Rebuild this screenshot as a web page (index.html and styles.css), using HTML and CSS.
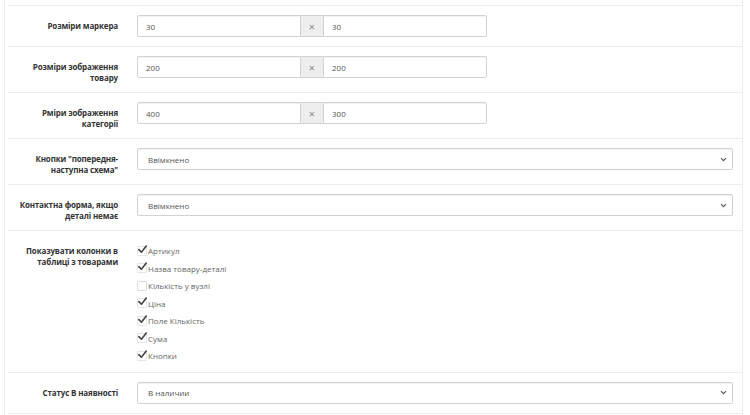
FILE: index.html
```html
<!DOCTYPE html>
<html lang="uk">
<head>
<meta charset="utf-8">
<link rel="stylesheet" href="styles.css">
</head>
<body>
<div class="panel">
  <div class="row">
    <label class="lbl">Розміри маркера</label>
    <div class="ctl">
      <div class="pair">
        <input class="inp" type="text" value="30">
        <span class="addon">×</span>
        <input class="inp" type="text" value="30">
      </div>
    </div>
  </div>
  <div class="row">
    <label class="lbl">Розміри зображення товару</label>
    <div class="ctl">
      <div class="pair">
        <input class="inp" type="text" value="200">
        <span class="addon">×</span>
        <input class="inp" type="text" value="200">
      </div>
    </div>
  </div>
  <div class="row">
    <label class="lbl">Рміри зображення категорії</label>
    <div class="ctl">
      <div class="pair">
        <input class="inp" type="text" value="400">
        <span class="addon">×</span>
        <input class="inp" type="text" value="300">
      </div>
    </div>
  </div>
  <div class="row">
    <label class="lbl">Кнопки "попередня-наступна схема"</label>
    <div class="ctl">
      <select class="sel"><option>Ввімкнено</option></select>
    </div>
  </div>
  <div class="row">
    <label class="lbl">Контактна форма, якщо деталі немає</label>
    <div class="ctl">
      <select class="sel"><option>Ввімкнено</option></select>
    </div>
  </div>
  <div class="row">
    <label class="lbl">Показувати колонки в таблиці з товарами</label>
    <div class="ctl checks">
      <div class="chk on"><span class="box"><svg viewBox="0 0 10 10" class="tick"><path d="M1 5.2 L3.8 8 L9.2 1.2" /></svg></span>Артикул</div>
      <div class="chk on"><span class="box"><svg viewBox="0 0 10 10" class="tick"><path d="M1 5.2 L3.8 8 L9.2 1.2" /></svg></span>Назва товару-деталі</div>
      <div class="chk"><span class="box"></span>Кількість у вузлі</div>
      <div class="chk on"><span class="box"><svg viewBox="0 0 10 10" class="tick"><path d="M1 5.2 L3.8 8 L9.2 1.2" /></svg></span>Ціна</div>
      <div class="chk on"><span class="box"><svg viewBox="0 0 10 10" class="tick"><path d="M1 5.2 L3.8 8 L9.2 1.2" /></svg></span>Поле Кількість</div>
      <div class="chk on"><span class="box"><svg viewBox="0 0 10 10" class="tick"><path d="M1 5.2 L3.8 8 L9.2 1.2" /></svg></span>Сума</div>
      <div class="chk on"><span class="box"><svg viewBox="0 0 10 10" class="tick"><path d="M1 5.2 L3.8 8 L9.2 1.2" /></svg></span>Кнопки</div>
    </div>
  </div>
  <div class="row">
    <label class="lbl">Статус В наявності</label>
    <div class="ctl">
      <select class="sel"><option>В наличии</option></select>
    </div>
  </div>
</div>
</body>
</html>
```
FILE: styles.css
```css
html, body {
  margin: 0;
  padding: 0;
  background: #fff;
}
body {
  font-family: "Open Sans", "Liberation Sans", sans-serif;
  font-size: 8px;
  color: #555;
}
.panel {
  margin-left: 4px;
  width: 734px;
  padding: 5px 0 0 3px;
  border-left: 1px solid #ececec;
  border-right: 1px solid #ececec;
  min-height: 415px;
  box-sizing: content-box;
}
.row {
  display: grid;
  grid-template-columns: 110px 1fr;
  column-gap: 19px;
  padding: 9px 9px 9px 0;
  border-top: 1px solid #ededed;
}
.row:last-child {
  border-bottom: 1px solid #ededed;
}
.lbl {
  text-align: right;
  font-weight: 700;
  letter-spacing: -0.15px;
  color: #333;
  font-size: 8px;
  line-height: 11px;
  padding-top: 5px;
  padding-left: 6px;
}
.ctl {
  min-width: 0;
}
.pair {
  display: flex;
  width: 350px;
  height: 22px;
}
.inp {
  flex: 1;
  min-width: 0;
  height: 22px;
  box-sizing: border-box;
  border: 1px solid #d2d2d2;
  border-radius: 2px;
  box-shadow: inset 0 1px 1px rgba(0,0,0,0.06);
  padding: 0 8px;
  font-family: inherit;
  font-size: 8px;
  color: #555;
  outline: none;
  margin: 0;
}
.pair .inp:first-child {
  border-top-right-radius: 0;
  border-bottom-right-radius: 0;
}
.pair .inp:last-child {
  border-top-left-radius: 0;
  border-bottom-left-radius: 0;
}
.addon {
  width: 22px;
  flex: none;
  box-sizing: border-box;
  height: 22px;
  background: #eee;
  border-top: 1px solid #d2d2d2;
  border-bottom: 1px solid #d2d2d2;
  display: flex;
  align-items: center;
  justify-content: center;
  color: #888;
  font-size: 11px;
}
.sel {
  display: block;
  width: 100%;
  height: 22px;
  box-sizing: border-box;
  border: 1px solid #d2d2d2;
  border-radius: 2px;
  box-shadow: inset 0 1px 1px rgba(0,0,0,0.06);
  padding: 0 16px 0 10px;
  font-family: inherit;
  font-size: 8px;
  color: #555;
  background: #fff url("data:image/svg+xml;utf8,<svg xmlns='http://www.w3.org/2000/svg' width='7' height='5' viewBox='0 0 7 5'><path d='M1 1.2 L3.5 3.7 L6 1.2' fill='none' stroke='%23555' stroke-width='1.1'/></svg>") no-repeat right 5px center;
  -webkit-appearance: none;
  appearance: none;
  outline: none;
  margin: 0;
}
.checks {
  padding-top: 2px;
  margin-bottom: -2px;
}
.chk {
  display: flex;
  align-items: center;
  height: 17.5px;
  color: #666;
  font-size: 8px;
}
.box {
  position: relative;
  width: 8px;
  height: 8px;
  border: 1px solid #dcdcdc;
  border-radius: 1px;
  margin-right: 1px;
  flex: none;
}
.chk.on .box {
  border-color: #e4e4e4;
}
.tick {
  position: absolute;
  left: 0;
  top: -2px;
  width: 9px;
  height: 9px;
}
.tick path {
  fill: none;
  stroke: #444;
  stroke-width: 1.8;
  stroke-linecap: round;
  stroke-linejoin: round;
}
```
